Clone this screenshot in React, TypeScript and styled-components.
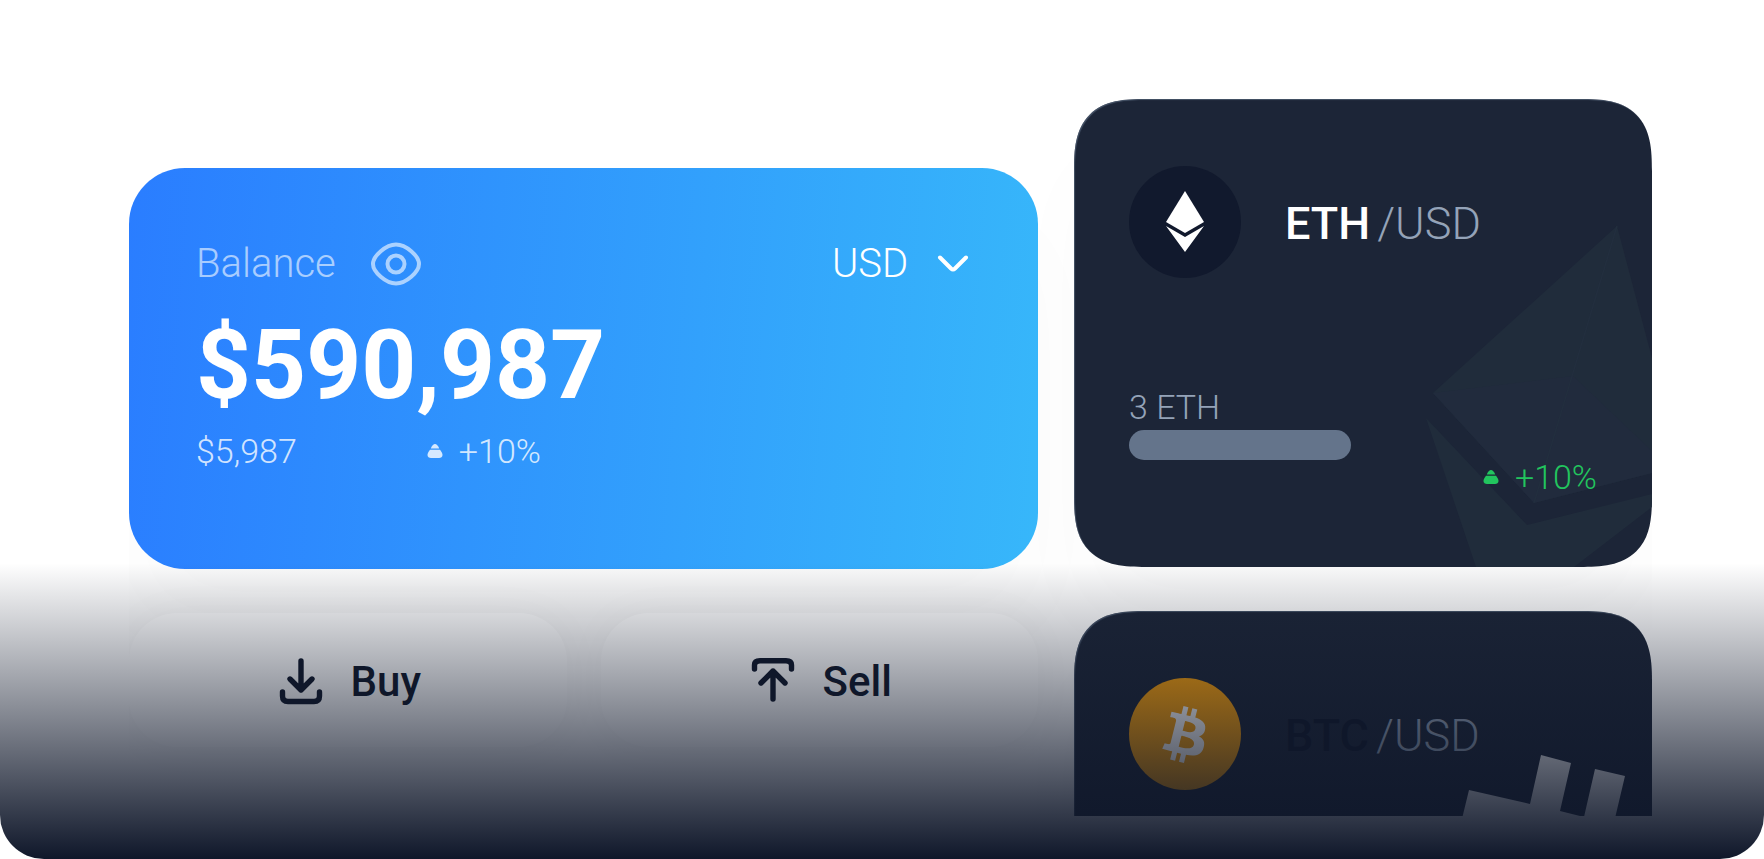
import React from 'react';
import styled, { createGlobalStyle } from 'styled-components';

const ink = '#0f172a';

const Global = createGlobalStyle`
  *, *::before, *::after { box-sizing: border-box; }
  body { margin: 0; background: #fff; font-family: Roboto, "Liberation Sans", sans-serif; }
  h2, p { margin: 0; }
`;

const Hero = styled.main`
  position: relative;
  height: 100vh;
  padding: 0 112px 43px 129px;
  border-radius: 0 0 44px 44px;
  overflow: hidden;
`;

const Fade = styled.div`
  position: absolute;
  left: 0;
  right: 0;
  bottom: 0;
  height: 296px;
  background: linear-gradient(to bottom, rgba(15, 23, 42, 0), ${ink});
  pointer-events: none;
`;

const Board = styled.div`
  display: grid;
  grid-template-columns: 909fr 578fr;
  column-gap: 36px;
  align-items: start;
  height: 100%;
  padding-top: 99px;
  overflow: hidden;
`;

const Wallet = styled.section`
  display: flex;
  flex-direction: column;
  gap: 44px;
  padding-top: 69px;
`;

const Assets = styled.section`
  display: flex;
  flex-direction: column;
  gap: 44px;
`;

const BalanceCard = styled.article`
  min-height: 401px;
  padding: 72px 69px 72px 67px;
  border-radius: 56px;
  background: linear-gradient(95deg, #2a7dff, #37b7fa);
  box-shadow: 0 60px 90px rgba(15, 23, 42, 0.02);
  color: #fff;
`;

const Row = styled.div<{ $gap?: number }>`
  display: flex;
  align-items: center;
  gap: ${(p) => p.$gap ?? 0}px;
`;

const TopRow = styled(Row)`
  justify-content: space-between;
  height: 48px;
`;

const Label = styled.span`
  font-size: 40px;
  line-height: 48px;
  font-weight: 350;
  color: rgba(255, 255, 255, 0.6);
`;

const IconButton = styled.button`
  display: flex;
  padding: 0;
  border: 0;
  background: none;
  color: rgba(255, 255, 255, 0.6);
`;

const Currency = styled.div`
  display: flex;
  align-items: center;
  gap: 28px;
`;

const CurrencySelect = styled.select`
  appearance: none;
  padding: 0;
  border: 0;
  background: none;
  color: #fff;
  font: 350 40px/48px Roboto, "Liberation Sans", sans-serif;
`;

const Amount = styled.p`
  margin-top: 21px;
  font-size: 96px;
  line-height: 112px;
  font-weight: 700;
`;

const Small = styled.span`
  font-size: 34px;
  line-height: 40px;
  font-weight: 350;
`;

const Delta = styled(Row)<{ $tone: string }>`
  color: ${(p) => p.$tone};
  gap: 16px;
`;

const Summary = styled(Row)`
  margin-top: 10px;
  gap: 130px;
  color: rgba(255, 255, 255, 0.8);
`;

const Actions = styled.div`
  display: grid;
  grid-template-columns: 1fr 1fr;
  gap: 34px;
`;

const ActionButton = styled.button`
  display: flex;
  align-items: center;
  justify-content: center;
  gap: 28px;
  height: 134px;
  padding: 4px 0 0 4px;
  border: 0;
  border-radius: 48px;
  background: #fff;
  box-shadow: 0 0 48px rgba(15, 23, 42, 0.03);
  color: ${ink};
  font: 500 42px/48px Roboto, "Liberation Sans", sans-serif;
`;

const AssetCard = styled.article`
  position: relative;
  min-height: 468px;
  padding: 67px 55px;
  border-radius: 72px;
  corner-shape: superellipse(1.5);
  overflow: hidden;
  background: #1c2537;
  box-shadow: inset 1px 1px 1px rgba(100, 116, 139, 0.6), 0 60px 90px rgba(15, 23, 42, 0.02);
`;

const Watermark = styled.svg`
  position: absolute;
  right: 0;
  bottom: 0;
`;

const Head = styled(Row)`
  gap: 44px;
`;

const Coin = styled.span<{ $fill: string }>`
  display: grid;
  place-items: center;
  width: 112px;
  height: 112px;
  border-radius: 50%;
  background: ${(p) => p.$fill};
`;

const Pair = styled.h2<{ $tone: string }>`
  padding-top: 4px;
  font-size: 45px;
  line-height: 56px;
  font-weight: 500;
  color: ${(p) => p.$tone};
`;

const Quote = styled.span`
  margin-left: 7px;
  font-weight: 350;
  color: #94a3b8;
`;

const Holding = styled.div`
  position: relative;
  display: flex;
  justify-content: space-between;
  margin-top: 109px;
  color: #94a3b8;
`;

const Pill = styled.div`
  width: 222px;
  height: 30px;
  margin-top: 3px;
  border-radius: 15px;
  background: #64748b;
`;

const HoldingDelta = styled(Delta)`
  margin-top: 70px;
  height: 40px;
`;

const EyeIcon = () => (
  <svg width="52" height="44" viewBox="0 0 52 44" fill="none" stroke="currentColor" strokeWidth="4">
    <path d="M26 2.500C36 2.500 49 14 49 22S36 41.500 26 41.500 3 30 3 22 16 2.500 26 2.500Z" />
    <circle cx="26" cy="22" r="8.500" />
  </svg>
);

const ChevronIcon = () => (
  <svg width="32" height="18" viewBox="0 0 32 18" fill="none" stroke="#fff" strokeWidth="4" strokeLinecap="round" strokeLinejoin="round">
    <path d="M3 2.500 14 13.500Q16 15.500 18 13.500L29 2.500" />
  </svg>
);

const UpIcon = () => (
  <svg width="16" height="16" viewBox="0 0 16 16" fill="currentColor">
    <path d="M3.800 5.500C4.800 2.500 6.500 1 8 1s3.200 1.500 4.200 4.500Z" />
    <path d="M3 6.700H13C14.500 8.500 15.500 10.500 15.500 12 15.500 14 14 15 12 15H4C2 15 .5 14 .5 12 .5 10.500 1.500 8.500 3 6.700Z" />
  </svg>
);

const BuyIcon = () => (
  <svg width="44" height="48" viewBox="0 0 44 48" fill="none" stroke="currentColor" strokeWidth="5.400" strokeLinecap="round" strokeLinejoin="round">
    <path d="M22 3V32M11 21 22 32 33 21M3.500 34V38Q3.500 43.500 9 43.500H35Q40.500 43.500 40.500 38V34" />
  </svg>
);

const SellIcon = () => (
  <svg width="44" height="48" viewBox="0 0 44 48" fill="none" stroke="currentColor" strokeWidth="5.400" strokeLinecap="round" strokeLinejoin="round">
    <path d="M22 41V13M10 25 22 13 34 25M3.500 11V7Q3.500 2.700 9 2.700H35Q40.500 2.700 40.500 7V11" />
  </svg>
);

const EthIcon = () => (
  <svg width="38" height="62" viewBox="0 0 38 62" fill="#fff">
    <path d="M19 0 38 31 19 42 0 31Z" />
    <path d="M0 35 19 46 38 35 19 61Z" />
  </svg>
);

const BtcIcon = () => (
  <svg width="45" height="56" viewBox="8.500 6 15.600 19.600" fill="#fff" overflow="visible">
    <path d="M23.189 14.02c.314-2.096-1.283-3.223-3.465-3.975l.708-2.84-1.728-.43-.69 2.765c-.454-.114-.92-.22-1.385-.326l.695-2.783L15.596 6l-.708 2.839c-.376-.086-.746-.17-1.104-.26l.002-.009-2.384-.595-.46 1.846s1.283.294 1.256.312c.7.175.826.638.805 1.006l-.806 3.235c.048.012.11.03.18.057l-.183-.045-1.13 4.532c-.086.212-.303.531-.793.41.018.025-1.256-.313-1.256-.313l-.858 1.978 2.25.561c.418.105.828.215 1.231.318l-.715 2.872 1.727.43.708-2.84c.472.127.93.245 1.378.357l-.706 2.828 1.728.43.715-2.866c2.948.558 5.164.333 6.097-2.333.752-2.146-.037-3.385-1.588-4.192 1.13-.26 1.98-1.003 2.207-2.538zm-3.95 5.538c-.533 2.147-4.148.986-5.32.695l.95-3.805c1.172.293 4.929.872 4.37 3.11zm.535-5.569c-.487 1.953-3.495.96-4.47.717l.86-3.45c.975.243 4.118.696 3.61 2.733z" />
  </svg>
);

export default function App() {
  return (
    <>
      <Global />
      <Hero>
        <Board>
          <Wallet>
            <BalanceCard>
              <TopRow>
                <Row $gap={34}>
                  <Label>Balance</Label>
                  <IconButton type="button" aria-label="Hide balance"><EyeIcon /></IconButton>
                </Row>
                <Currency>
                  <CurrencySelect aria-label="Currency" defaultValue="USD">
                    <option>USD</option>
                  </CurrencySelect>
                  <ChevronIcon />
                </Currency>
              </TopRow>
              <Amount>$590,987</Amount>
              <Summary>
                <Small>$5,987</Small>
                <Delta $tone="inherit"><UpIcon /><Small>+10%</Small></Delta>
              </Summary>
            </BalanceCard>
            <Actions>
              <ActionButton type="button"><BuyIcon />Buy</ActionButton>
              <ActionButton type="button"><SellIcon />Sell</ActionButton>
            </Actions>
          </Wallet>
          <Assets>
            <AssetCard>
              <Watermark width="226" height="342" viewBox="0 0 226 342">
                <path d="M191 1 226 133V248L108 278 7 168Z" fill="#202c3b" />
                <path d="M7 168 147 151 226 226V248L108 278Z" fill="#212b3d" />
                <path d="M191 1 108 278M101 300 89 342" stroke="#222e3e" strokeWidth="1.500" />
                <path d="M0 193 101 300 226 269V282L148 342H50Z" fill="#202c3b" />
              </Watermark>
              <Head>
                <Coin $fill="#11192d"><EthIcon /></Coin>
                <Pair $tone="#fff">ETH<Quote>/USD</Quote></Pair>
              </Head>
              <Holding>
                <div>
                  <Small>3 ETH</Small>
                  <Pill />
                </div>
                <HoldingDelta $tone="#22c55e"><UpIcon /><Small>+10%</Small></HoldingDelta>
              </Holding>
            </AssetCard>
            <AssetCard>
              <Watermark width="200" height="338" viewBox="0 0 200 338">
                <path d="M17 49 78 63 89 14 119 22 108 70 132 76 143 28 173 35 160 90H7Z" fill="#fff" />
              </Watermark>
              <Head>
                <Coin $fill="#f59e0b"><BtcIcon /></Coin>
                <Pair $tone={ink}>BTC<Quote>/USD</Quote></Pair>
              </Head>
            </AssetCard>
          </Assets>
        </Board>
        <Fade />
      </Hero>
    </>
  );
}
